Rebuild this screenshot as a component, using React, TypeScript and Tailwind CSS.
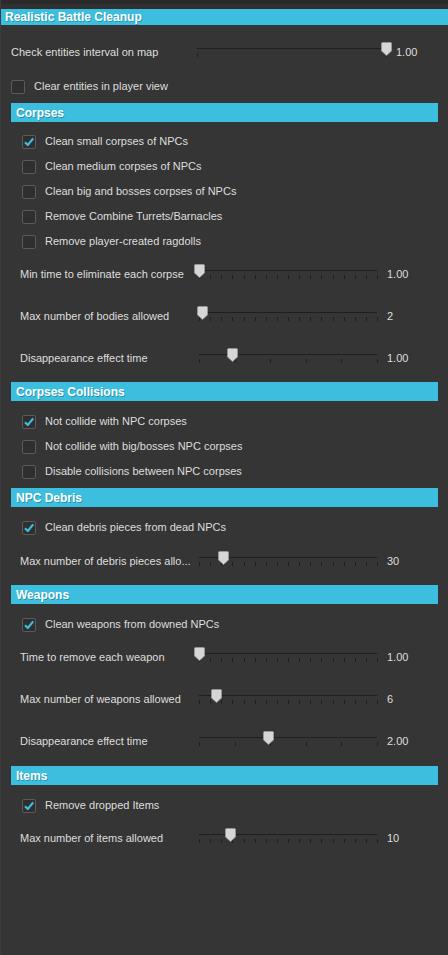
import React from "react";

const font = { fontFamily: "'Liberation Sans', Arial, sans-serif" };

function Check({ checked }: { checked?: boolean }) {
  return (
    <div className="w-[14px] h-[14px] border border-[#5a5a5a] rounded-[2px] bg-[#2f2f2f] flex items-center justify-center shrink-0">
      {checked && (
        <svg width="12" height="12" viewBox="0 0 12 12">
          <path d="M2 6.2 L4.8 9 L10.2 2.4" fill="none" stroke="#3cbfdf" strokeWidth="2.2" strokeLinejoin="round" />
        </svg>
      )}
    </div>
  );
}

function CheckRow({ label, checked, indent = true }: { label: string; checked?: boolean; indent?: boolean }) {
  return (
    <div className={`flex items-center h-[25px] ${indent ? "pl-[21px]" : "pl-[10px]"}`}>
      <Check checked={checked} />
      <span className="ml-[9px] text-[11px] text-[#dedede]">{label}</span>
    </div>
  );
}

function Thumb() {
  return (
    <svg width="11" height="14" viewBox="0 0 11 14" className="absolute top-[-6px]" style={{ marginLeft: -5.5 }}>
      <path d="M1.5 0.5 H9.5 Q10.5 0.5 10.5 1.5 V9 L5.5 13.5 L0.5 9 V1.5 Q0.5 0.5 1.5 0.5 Z" fill="#d6d6d6" stroke="#9a9a9a" strokeWidth="0.8" />
    </svg>
  );
}

function Slider({
  label,
  value,
  pos,
  ticks,
  wide,
}: {
  label: string;
  value: string;
  pos: number;
  ticks: number;
  wide?: boolean;
}) {
  const tickList = Array.from({ length: ticks }, (_, i) => i);
  return (
    <div className={`flex items-center h-[42px] ${wide ? "pl-[10px]" : "pl-[19px]"}`}>
      <div className={`${wide ? "w-[186px]" : "w-[179px]"} shrink-0 text-[11px] text-[#dedede] whitespace-nowrap`}>
        {label}
      </div>
      <div className={`relative shrink-0 ${wide ? "w-[189px]" : "w-[178px]"} h-[12px] mt-[4px]`}>
        <div className="absolute left-0 right-0 top-0 h-px bg-[#1f1f1f]" />
        {tickList.map((i) => (
          <div
            key={i}
            className="absolute top-[5px] w-px h-[4px] bg-[#1f1f1f]"
            style={{ left: ticks > 1 ? `${(i / (ticks - 1)) * 100}%` : 0 }}
          />
        ))}
        <div className="absolute top-0" style={{ left: `${pos * 100}%` }}>
          <Thumb />
        </div>
      </div>
      <span className="ml-[10px] text-[11px] text-[#dedede]">{value}</span>
    </div>
  );
}

function Header({ title, mt }: { title: string; mt: string }) {
  return (
    <div className={`mx-[10px] ${mt} h-[19px] bg-[#3cbfdf] flex items-center pl-[5px]`}>
      <span className="text-[12px] font-bold text-white" style={{ textShadow: "1px 1px 0 rgba(0,0,0,0.25)" }}>
        {title}
      </span>
    </div>
  );
}

export default function App() {
  return (
    <div className="w-[448px] h-[955px] bg-[#353535] overflow-hidden border-l border-[#3c3c3c]" style={font}>
      <div className="h-[4px] bg-[#2a2a2a]" />
      <div className="h-[5px] bg-[#303030]" />
      <div className="h-[16px] bg-[#3cbfdf] flex items-center pl-[4px]">
        <span className="text-[12px] font-bold text-white" style={{ textShadow: "1px 1px 0 rgba(0,0,0,0.25)" }}>
          Realistic Battle Cleanup
        </span>
      </div>

      <div className="mt-[6px]">
        <Slider label="Check entities interval on map" value="1.00" pos={1} ticks={2} wide />
      </div>
      <div className="mt-[1px]">
        <CheckRow label="Clear entities in player view" indent={false} />
      </div>

      <Header title="Corpses" mt="mt-[4px]" />
      <div className="pt-[7px]">
        <CheckRow label="Clean small corpses of NPCs" checked />
        <CheckRow label="Clean medium corpses of NPCs" />
        <CheckRow label="Clean big and bosses corpses of NPCs" />
        <CheckRow label="Remove Combine Turrets/Barnacles" />
        <CheckRow label="Remove player-created ragdolls" />
      </div>
      <div className="mt-[-1px]">
        <Slider label="Min time to eliminate each corpse" value="1.00" pos={0} ticks={17} />
        <Slider label="Max number of bodies allowed" value="2" pos={0.017} ticks={17} />
        <Slider label="Disappearance effect time" value="1.00" pos={0.19} ticks={6} />
      </div>

      <Header title="Corpses Collisions" mt="mt-[3px]" />
      <div className="pt-[8px]">
        <CheckRow label="Not collide with NPC corpses" checked />
        <CheckRow label="Not collide with big/bosses NPC corpses" />
        <CheckRow label="Disable collisions between NPC corpses" />
      </div>

      <Header title="NPC Debris" mt="mt-[4px]" />
      <div className="pt-[8px]">
        <CheckRow label="Clean debris pieces from dead NPCs" checked />
      </div>
      <div className="mt-0">
        <Slider label="Max number of debris pieces allo..." value="30" pos={0.135} ticks={17} />
      </div>

      <Header title="Weapons" mt="mt-[3px]" />
      <div className="pt-[8px]">
        <CheckRow label="Clean weapons from downed NPCs" checked />
      </div>
      <div className="mt-[-1px]">
        <Slider label="Time to remove each weapon" value="1.00" pos={0} ticks={17} />
        <Slider label="Max number of weapons allowed" value="6" pos={0.1} ticks={17} />
        <Slider label="Disappearance effect time" value="2.00" pos={0.39} ticks={6} />
      </div>

      <Header title="Items" mt="mt-[4px]" />
      <div className="pt-[8px]">
        <CheckRow label="Remove dropped Items" checked />
      </div>
      <div className="mt-[-1px]">
        <Slider label="Max number of items allowed" value="10" pos={0.175} ticks={17} />
      </div>
    </div>
  );
}
